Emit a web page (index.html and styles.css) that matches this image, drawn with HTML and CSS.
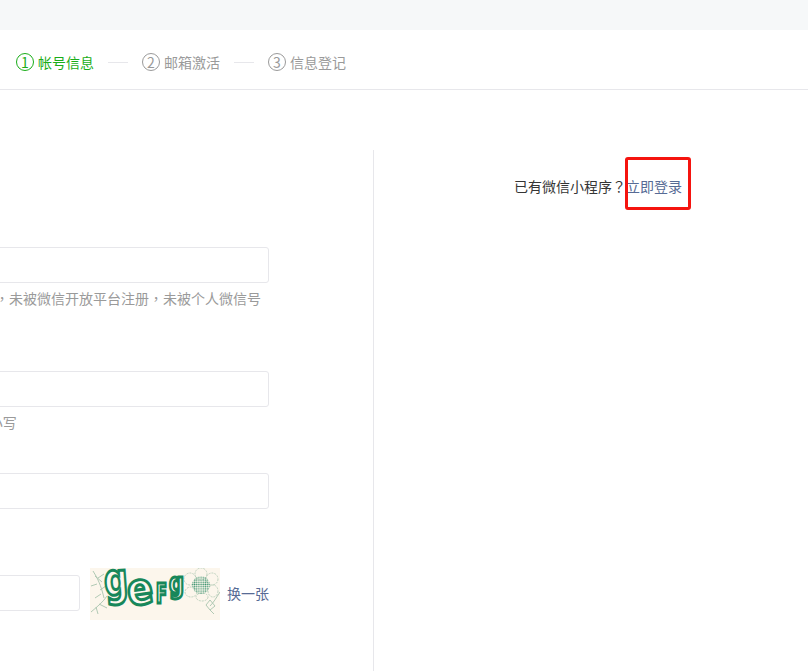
FILE: index.html
```html
<!DOCTYPE html>
<html lang="zh-TW">
<head>
<meta charset="utf-8">
<title>小程序注册</title>
<link rel="stylesheet" href="styles.css">
</head>
<body>
<div class="topbar"></div>
<nav class="steps">
  <div class="step step-active"><span class="num">1</span><span class="label">帐号信息</span></div>
  <span class="sep"></span>
  <div class="step"><span class="num">2</span><span class="label">邮箱激活</span></div>
  <span class="sep"></span>
  <div class="step"><span class="num">3</span><span class="label">信息登记</span></div>
</nav>
<main class="main">
  <section class="left">
    <form class="form">
      <div class="field field-a">
        <input class="input" type="text">
        <p class="hint">作为登录帐号，请填写未被微信公众平台注册，未被微信开放平台注册，未被个人微信号</p>
      </div>
      <div class="field field-b">
        <input class="input" type="password">
        <p class="hint">字母、数字或者英文符号，最短8位，区分大小写</p>
      </div>
      <div class="field field-c">
        <input class="input" type="password">
      </div>
      <div class="captcha-row">
        <input class="input input-code" type="text">
        <svg class="captcha" viewBox="0 0 130 52" width="130" height="52">
          <defs>
            <pattern id="dots" width="2.2" height="2.2" patternUnits="userSpaceOnUse">
              <circle cx="1.1" cy="1.1" r="0.8" fill="#3d9470"/>
            </pattern>
          </defs>
          <rect width="130" height="52" fill="#fcf6ec"/>
          <g fill="none" stroke="#a8c4ae" stroke-width="0.9">
            <path d="M1 44 C8 38 13 34 17 28 M14 30 C12 22 10 14 3 3 M8 10 L14 6 M5 8 L12 14 M7 16 L1 18 M10 22 L16 18 M11 26 L5 30 M9 36 L17 40 M6 39 L8 46"/>
          </g>
          <g fill="none" stroke="#b7cdb9" stroke-width="0.9" stroke-dasharray="2 1">
            <ellipse cx="111" cy="6" rx="6" ry="6"/>
            <ellipse cx="122" cy="11" rx="6" ry="6"/>
            <ellipse cx="123" cy="23" rx="5" ry="6"/>
            <ellipse cx="112" cy="29" rx="6" ry="4"/>
            <ellipse cx="101" cy="24" rx="6" ry="5"/>
            <ellipse cx="100" cy="11" rx="6" ry="6"/>
          </g>
          <path fill="none" stroke="#a8c4ae" stroke-width="0.9" d="M130 24 C126 30 124 34 120 38 M120 32 L116 37 L120 42 L125 38 Z M120 42 L124 46"/>
          <circle cx="111" cy="17" r="9" fill="url(#dots)"/>
          <g class="captcha-text">
            <text x="15" y="28" class="cap-g" textLength="24" lengthAdjust="spacingAndGlyphs" transform="rotate(-4 15 28)">g</text>
            <text x="39" y="38" class="cap-e" textLength="26" lengthAdjust="spacingAndGlyphs" transform="rotate(-8 39 38)">e</text>
            <text x="66" y="35" class="cap-f" textLength="11" lengthAdjust="spacingAndGlyphs">F</text>
            <text x="79" y="25" class="cap-s" textLength="15" lengthAdjust="spacingAndGlyphs">g</text>
          </g>
        </svg>
        <a class="link swap" href="#">换一张</a>
      </div>
    </form>
  </section>
  <aside class="right">
    <p class="login-line">已有微信小程序？<a class="link" href="#">立即登录</a></p>
    <span class="highlight"></span>
  </aside>
</main>
</body>
</html>
```
FILE: styles.css
```css
* { box-sizing: border-box; }
html, body { height: 100%; }
body {
  margin: 0;
  overflow: hidden;
  background: #fff;
  color: #353535;
  font: 14px/20px "Noto Sans CJK TC", "Noto Sans CJK SC", "Liberation Sans", sans-serif;
  display: flex;
  flex-direction: column;
}
.topbar { height: 30px; background: #f6f8f9; flex: none; }
.steps {
  flex: none;
  height: 60px;
  padding: 23px 0 0 16px;
  display: flex;
  align-items: flex-start;
  border-bottom: 1px solid #e7e7eb;
  color: #9a9a9a;
}
.step { display: flex; align-items: center; gap: 4px; height: 18px; }
.step-active { color: #1aad19; }
.num {
  width: 18px;
  height: 18px;
  border: 1px solid currentColor;
  border-radius: 50%;
  font-size: 14px;
  line-height: 16px;
  text-align: center;
}
.label { font-size: 14px; line-height: 16px; white-space: nowrap; }
.sep {
  width: 20px;
  height: 1px;
  margin: 9px 14px 0;
  background: #e7e7eb;
}
.main { flex: 1; display: flex; min-height: 0; margin-top: 60px; }
.left {
  width: 374px;
  flex: none;
  padding-top: 97px;
  border-right: 1px solid #e7e7eb;
}
.form { width: 554px; margin-left: -285px; }
.input {
  display: block;
  width: 100%;
  height: 36px;
  padding: 0 10px;
  border: 1px solid #e7e7eb;
  border-radius: 3px;
  background: #fff;
  outline: none;
}
.hint {
  margin: 5px 0 0;
  color: #9a9a9a;
  line-height: 20px;
  white-space: nowrap;
}
.field-a { height: 124px; }
.field-b { height: 102px; }
.field-c { height: 95px; }
.captcha-row { display: flex; align-items: flex-start; }
.input-code { width: 365px; margin-top: 7px; flex: none; }
.captcha { flex: none; display: block; margin-left: 10px; }
.captcha-text text {
  font-family: "DejaVu Sans", sans-serif;
  font-weight: 700;
  fill: #fdf8ef;
  stroke: #17875a;
  stroke-width: 3;
}
.cap-g { font-size: 45px; }
.cap-e { font-size: 44px; }
.cap-f { font-size: 26px; }
.cap-s { font-size: 28px; }
.link { color: #576b95; text-decoration: none; }
.swap { margin: 15px 0 0 7px; white-space: nowrap; }
.right { position: relative; flex: 1; padding: 26px 0 0 140px; }
.login-line { margin: 0; white-space: nowrap; }
.highlight {
  position: absolute;
  left: 251px;
  top: 7px;
  width: 66px;
  height: 53px;
  border: 3px solid #f5140f;
  border-radius: 3px;
}
```
